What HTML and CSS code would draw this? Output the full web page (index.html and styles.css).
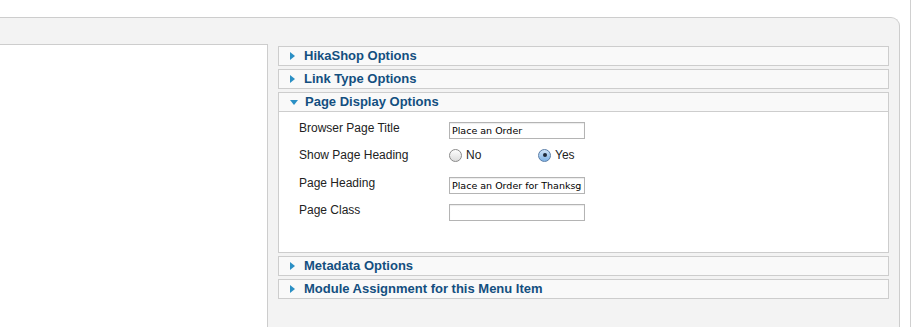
FILE: index.html
```html
<!DOCTYPE html>
<html lang="en">
<head>
  <meta charset="UTF-8">
  <title>Menu Item: Edit</title>
  <link rel="stylesheet" href="styles.css">
</head>
<body>
  <div class="page">
    <div class="panel">
      <div class="leftbox"></div>

      <div class="sliders">
        <div class="slide">
          <h3 class="toggler"><span class="arrow"></span>HikaShop Options</h3>
        </div>
        <div class="slide">
          <h3 class="toggler"><span class="arrow"></span>Link Type Options</h3>
        </div>
        <div class="slide open">
          <h3 class="toggler"><span class="arrow down"></span>Page Display Options</h3>
          <div class="pane">
            <div class="form">
              <label class="lbl">Browser Page Title</label>
              <div><input class="text" type="text" value="Place an Order"></div>

              <label class="lbl lbl-radio">Show Page Heading</label>
              <div class="radios">
                <span class="opt"><span class="radio"></span>No</span>
                <span class="opt"><span class="radio on"></span>Yes</span>
              </div>

              <label class="lbl">Page Heading</label>
              <div><input class="text" type="text" value="Place an Order for Thanksgiving"></div>

              <label class="lbl">Page Class</label>
              <div><input class="text" type="text" value=""></div>
            </div>
          </div>
        </div>
        <div class="slide">
          <h3 class="toggler"><span class="arrow"></span>Metadata Options</h3>
        </div>
        <div class="slide">
          <h3 class="toggler"><span class="arrow"></span>Module Assignment for this Menu Item</h3>
        </div>
      </div>
    </div>
    <div class="edge"></div>
  </div>
</body>
</html>
```

FILE: styles.css
```css
body {
  margin: 0;
  background: #fff;
  font-family: 'Liberation Sans', Arial, sans-serif;
  color: #222;
  overflow: hidden;
}
.page {
  display: flex;
  height: 327px;
  overflow: hidden;
}
.panel {
  display: flex;
  margin-top: 17px;
  margin-left: -10px;
  width: 899px;
  padding: 26px 10px 0 0;
  background: #f3f3f3;
  border-top: 1px solid #cdcdcd;
  border-right: 1px solid #cdcdcd;
  border-top-right-radius: 9px;
}
.leftbox {
  width: 277px;
  background: #fff;
  border-top: 1px solid #cdcdcd;
  border-right: 1px solid #cdcdcd;
}
.sliders {
  margin-left: 10px;
  margin-top: 2px;
  width: 611px;
}
.slide {
  border: 1px solid #cdcdcd;
  background: #f9f9f9;
  margin-bottom: 3px;
}
.toggler {
  margin: 0;
  height: 18px;
  line-height: 18px;
  padding-left: 11px;
  font-size: 13px;
  font-weight: bold;
  color: #134f80;
  display: flex;
  align-items: center;
}
.arrow {
  width: 0;
  height: 0;
  border-top: 4px solid transparent;
  border-bottom: 4px solid transparent;
  border-left: 5px solid #2a8fc4;
  margin-right: 9px;
}
.arrow.down {
  border-left: 4px solid transparent;
  border-right: 4px solid transparent;
  border-top: 5px solid #2a8fc4;
  border-bottom: none;
  margin-right: 7px;
  margin-top: 1px;
}
.pane {
  background: #fff;
  border-top: 1px solid #cdcdcd;
}
.form {
  display: grid;
  grid-template-columns: 150px 1fr;
  grid-template-rows: 25px 30px 27px 17px;
  padding: 10px 0 31px 20px;
}
.lbl {
  font-size: 12px;
  line-height: 14px;
  margin-top: -1px;
  color: #222;
}
.lbl-radio {
  margin-top: 1px;
}
.text {
  display: block;
  box-sizing: border-box;
  width: 136px;
  height: 17px;
  margin: 0;
  padding: 0 2px;
  border: 1px solid #b4b4b4;
  box-shadow: inset 0 1px 1px rgba(0,0,0,0.08);
  font-family: 'DejaVu Sans', Verdana, sans-serif;
  font-size: 9.5px;
  color: #000;
  background: #fff;
  outline: none;
}
.radios {
  display: flex;
  align-items: flex-start;
  padding-top: 1px;
}
.opt {
  display: flex;
  align-items: center;
  width: 89px;
  font-size: 12px;
  line-height: 14px;
}
.radio {
  box-sizing: border-box;
  width: 13px;
  height: 13px;
  margin-right: 4px;
  border-radius: 50%;
  border: 1px solid #8a8a8a;
  background: linear-gradient(#fdfdfd, #dcdcdc);
  position: relative;
}
.radio.on {
  border-color: #5a7ea8;
  background: linear-gradient(#cfe3f7, #7fb3e6);
}
.radio.on::after {
  content: "";
  position: absolute;
  left: 3.5px;
  top: 3.5px;
  width: 4px;
  height: 4px;
  border-radius: 50%;
  background: #1e2a3a;
}
.edge {
  margin-left: 10px;
  width: 1px;
  background: #d0d0d0;
}
```
